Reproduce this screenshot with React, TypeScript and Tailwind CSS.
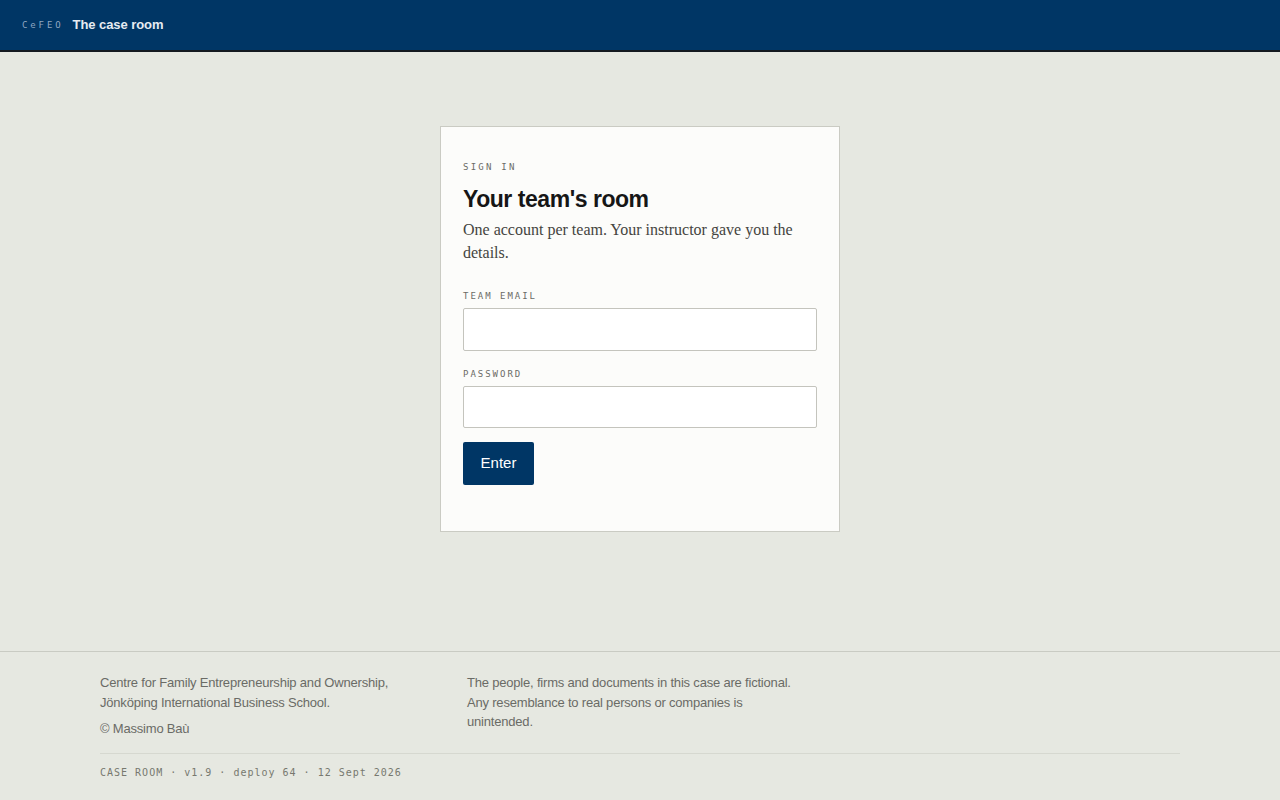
import React from "react";

const sans = { fontFamily: '"Liberation Sans", Arial, sans-serif' };

export default function App() {
  return (
    <div className="min-h-screen flex flex-col bg-[#e6e8e1] font-['Liberation_Sans',Arial,sans-serif]">
      <header className="h-[52px] bg-[#003665] border-b-2 border-[#141a20] flex items-center px-[22px] gap-[9px] shrink-0">
        <span className="font-['DejaVu_Sans_Mono',monospace] text-[9px] tracking-[0.32em] text-[#8fa6c0] pt-[1px]">CeFEO</span>
        <span className="text-[13px] font-bold text-[#e6ecf2] tracking-[-0.005em]">The case room</span>
      </header>

      <main className="flex-1 flex justify-center pt-[74px] pb-[119px]">
        <div className="w-[400px] h-fit bg-[#fcfcfa] border border-[#cacbc3] px-[22px] pt-[34px] pb-[46px]">
          <div className="font-['DejaVu_Sans_Mono',monospace] text-[9px] tracking-[0.25em] text-[#6b6b66] leading-[12px]">SIGN IN</div>
          <h1 className="mt-[12px] text-[23px] leading-[28px] font-bold text-[#161616] tracking-[-0.02em]">Your team's room</h1>
          <p className="mt-[5px] font-['Liberation_Serif',serif] text-[16px] leading-[23px] text-[#444440]">
            One account per team. Your instructor gave you the details.
          </p>
          <label className="block mt-[26px] font-['DejaVu_Sans_Mono',monospace] text-[9px] tracking-[0.22em] text-[#6b6b66] leading-[12px]">TEAM EMAIL</label>
          <input className="block mt-[6px] w-full h-[43px] bg-white border border-[#c4c4bd] rounded-[2px] px-3 text-[15px] outline-none" />
          <label className="block mt-[17px] font-['DejaVu_Sans_Mono',monospace] text-[9px] tracking-[0.22em] text-[#6b6b66] leading-[12px]">PASSWORD</label>
          <input type="password" className="block mt-[6px] w-full h-[42px] bg-white border border-[#c4c4bd] rounded-[2px] px-3 text-[15px] outline-none" />
          <button className="block mt-[14px] w-[71px] h-[43px] bg-[#003665] rounded-[2px] text-white text-[15px] font-medium" style={sans}>Enter</button>
        </div>
      </main>

      <footer className="border-t border-[#c9cbc3] shrink-0">
        <div className="mx-[100px] pt-[21px] pb-[22px]">
          <div className="flex pb-[14px] border-b border-[#d6d8d0]">
            <div className="w-[367px] text-[13px] leading-[19.5px] text-[#6a6b66] tracking-[-0.015em]">
              <div>Centre for Family Entrepreneurship and Ownership,<br />Jönköping International Business School.</div>
              <div className="mt-[7px]">© Massimo Baù</div>
            </div>
            <div className="w-[340px] text-[13px] leading-[19.5px] text-[#6a6b66] tracking-[-0.015em]">
              The people, firms and documents in this case are fictional. Any resemblance to real persons or companies is unintended.
            </div>
          </div>
          <div className="mt-[13px] font-['DejaVu_Sans_Mono',monospace] text-[10px] tracking-[0.1em] text-[#77786f] leading-[12px]">
            CASE ROOM · v1.9 · deploy 64 · 12 Sept 2026
          </div>
        </div>
      </footer>
    </div>
  );
}
